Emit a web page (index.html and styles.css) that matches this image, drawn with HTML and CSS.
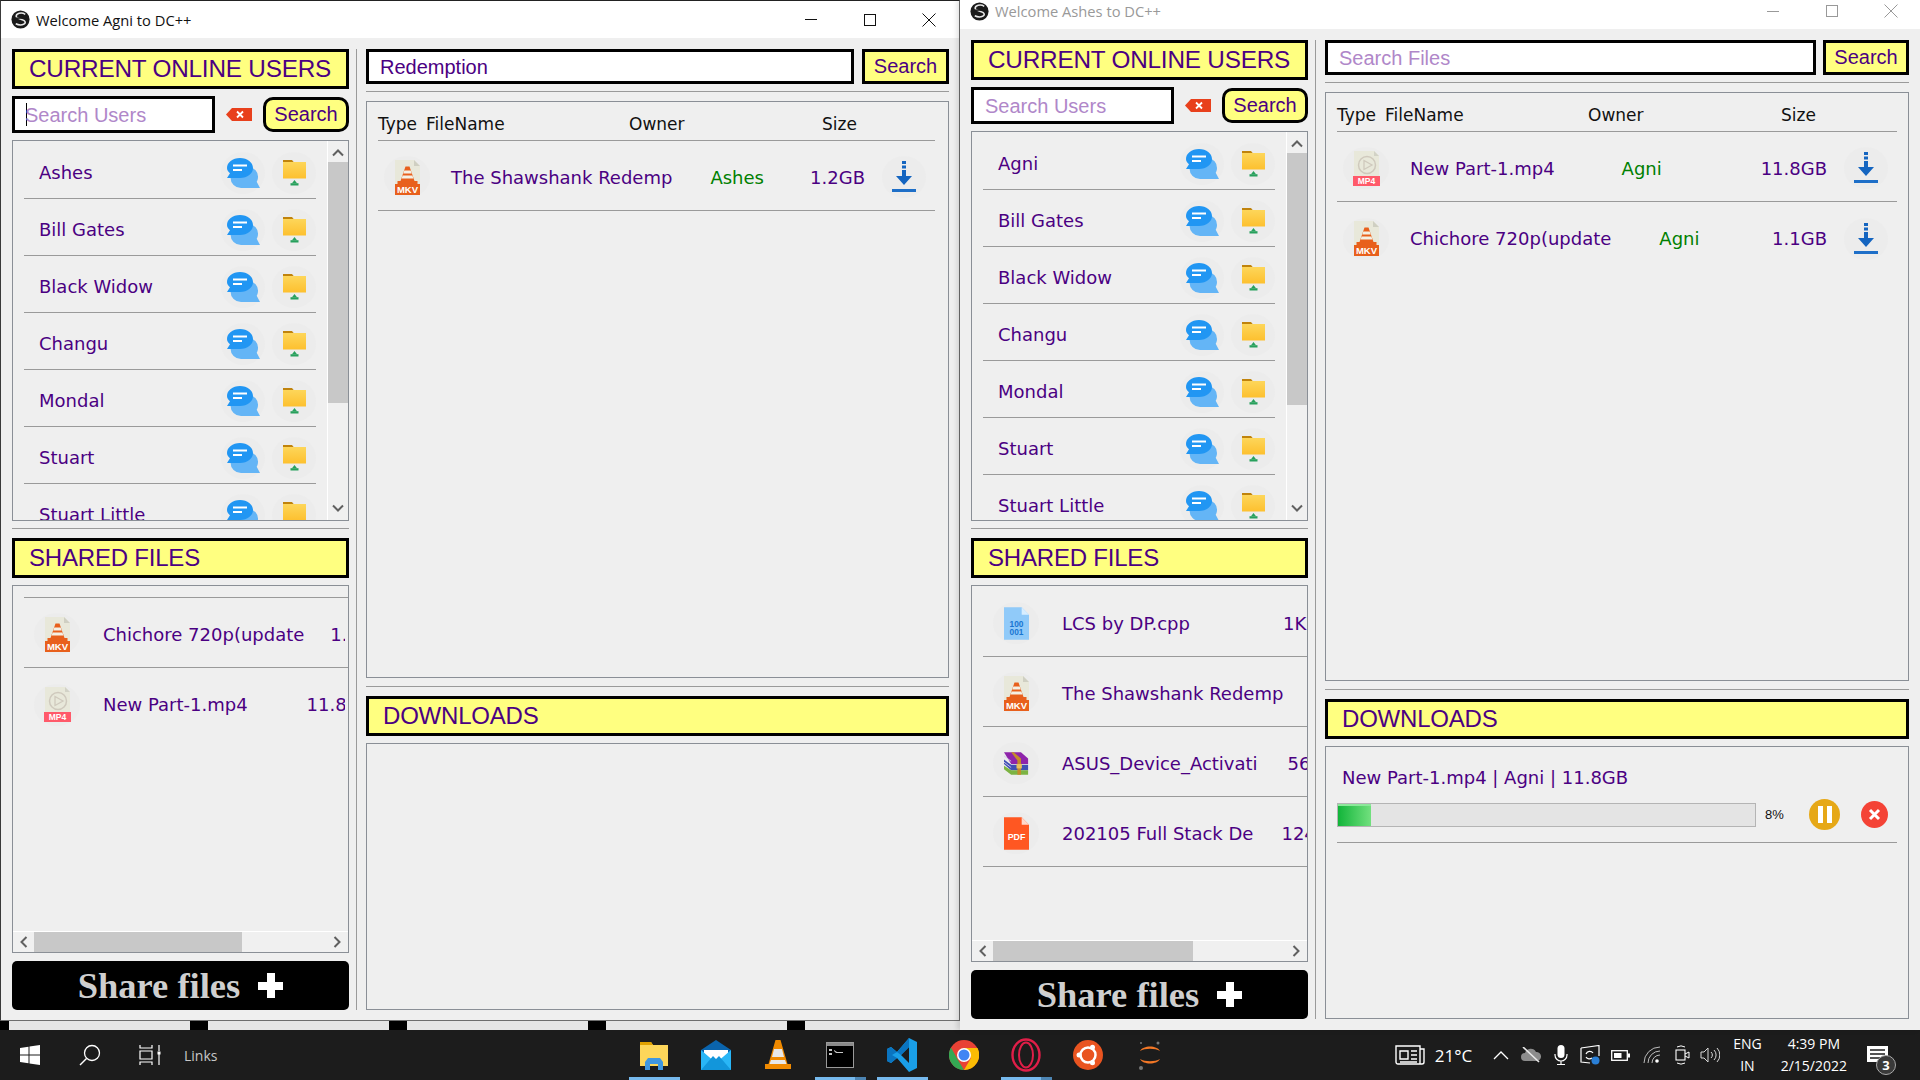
FILE: index.html
```html
<!DOCTYPE html>
<html lang="en">
<head>
  <meta charset="UTF-8" />
  <title>DC++</title>
  <link rel="stylesheet" href="styles.css">
</head>
<body>
  <svg class="gradients" width="0" height="0">
    <defs>
      <linearGradient id="folderFill" x1="0" y1="0" x2="0" y2="1"><stop offset="0" stop-color="#fdd65a"/><stop offset="1" stop-color="#fdc02f"/></linearGradient>
    </defs>
  </svg>
  <svg class="sprites" width="0" height="0">
    <symbol id="i-logo" viewBox="0 0 20 20">
      <circle cx="10" cy="10" r="9.5" fill="#1a1a1a"/>
      <path d="M15 4.5C11 2 5 3.5 5.5 7c.4 2.600 9.500 2.500 9.500 6 0 2.700-5.500 3.800-10 1.500" fill="none" stroke="#e8e8e8" stroke-width="1.600"/>
      <path d="M1 10c5-2 13-2 18 0" fill="none" stroke="#1a1a1a" stroke-width="1.500"/>
    </symbol>
    <symbol id="i-chat" viewBox="0 0 33 30">
      <path d="M14 9h8a9.500 9.500 0 0 1 9 10c0 1.800-.5 3.400-1.300 4.800L33 30H14a10.500 10.500 0 0 1 0-21z" fill="#64b5f6"/>
      <path d="M13 0c7.500 0 13 4.500 13 10s-5.500 10-13 10H0l3-4.800C1.100 13.600 0 12 0 10 0 4.500 5.500 0 13 0z" fill="#2196f3"/>
      <rect x="6" y="6.500" width="14" height="2" fill="#fff"/>
      <rect x="6" y="11" width="9" height="2" fill="#fff"/>
    </symbol>
    <symbol id="i-folder" viewBox="0 0 23 26">
      <path d="M0 0h9l2 2.500h-11z" fill="#c0830c"/>
      <rect x="0" y="2" width="23" height="16.500" fill="url(#folderFill)"/>
      <path d="M11.500 20l2.500 3.200h-5z" fill="#27a05c"/>
      <rect x="7.500" y="23.200" width="8" height="2.300" fill="#27a05c"/>
    </symbol>
    <symbol id="i-mkv" viewBox="0 0 25 35">
      <path d="M0 0h19l6 6v29H0z" fill="#e8e8da"/>
      <path d="M19 0l6 6h-6z" fill="#cfcfc2"/>
      <path d="M10.500 6.500h4l5 14.500h3v3H2.500v-3h3z" fill="#e8601c"/>
      <path d="M9.300 10.500h6.400l1 3H8.300zM7.600 15.500h9.800l1 3H6.600z" fill="#f4f0e4"/>
      <rect y="24" width="25" height="11" fill="#e8601c"/>
      <text x="12.500" y="33" class="icon-label" font-size="9.500">MKV</text>
    </symbol>
    <symbol id="i-mp4" viewBox="0 0 27 35">
      <path d="M1 0h20l5 5v25H1z" fill="#e8e8da"/>
      <path d="M21 0l5 5h-5z" fill="#d2d2c6"/>
      <circle cx="14" cy="14" r="8.500" fill="none" stroke="#cfc9bd" stroke-width="1.500"/>
      <path d="M11 9.500l8 4.500-8 4.500z" fill="none" stroke="#cfc9bd" stroke-width="1.300"/>
      <rect y="25" width="27" height="10" fill="#ff5a6a"/>
      <text x="13.500" y="33.300" class="icon-label" font-size="8.500">MP4</text>
    </symbol>
    <symbol id="i-bin" viewBox="0 0 24 31">
      <path d="M0 0h17l7 7v24H0z" fill="#90caf9"/>
      <path d="M17 0l7 7h-7z" fill="#d8eeff"/>
      <text x="12" y="19" class="icon-label bin-label" font-size="8">100</text>
      <text x="12" y="27" class="icon-label bin-label" font-size="8">001</text>
    </symbol>
    <symbol id="i-pdf" viewBox="0 0 24 31">
      <path d="M0 0h17l7 7v24H0z" fill="#ff5722"/>
      <path d="M17 0l7 7h-7z" fill="#ffd8cc"/>
      <text x="12" y="22" class="icon-label" font-size="8.500">PDF</text>
    </symbol>
    <symbol id="i-rar" viewBox="0 0 28 25">
      <path d="M0 0h19l8 7v6H8z" fill="#8e24aa"/>
      <path d="M0 8l8 6h19v6H8L0 13z" fill="#3f51b5"/>
      <path d="M0 15l8 5h19v5H8l-8-6z" fill="#7cb342"/>
      <path d="M8 0h3l8 7v18h-4V9z" fill="#c58b2a"/>
      <rect x="14" y="13" width="6" height="5" fill="#e8c15a"/>
      <path d="M0 4l8 6M0 11l8 6" stroke="#d7c9e8" stroke-width="1"/>
    </symbol>
    <symbol id="i-dl" viewBox="0 0 24 32">
      <path d="M10 0h4v3h-4zM10 4.500h4v3h-4zM10 9h4v6h6l-8 9-8-9h6z" fill="#1565c0"/>
      <rect y="28" width="24" height="3" fill="#1e6fc8"/>
    </symbol>
    <symbol id="i-clear" viewBox="0 0 26 13">
      <path d="M6 0h20v13H6L0 6.500z" fill="#e8401c"/>
      <path d="M11 3.500l6 6M17 3.500l-6 6" stroke="#fff" stroke-width="1.800"/>
    </symbol>
    <symbol id="i-chevron" viewBox="0 0 12 8">
      <path d="M1 6.500l5-5 5 5" fill="none" stroke="#606060" stroke-width="2"/>
    </symbol>
    <symbol id="i-close" viewBox="0 0 14 14">
      <path d="M.5.5l13 13M13.500.5l-13 13" fill="none" stroke="currentColor" stroke-width="1"/>
    </symbol>
    <symbol id="t-explorer" viewBox="0 0 28 30">
      <path d="M0 2h11l2 3h15v21H0z" fill="#fdd65a"/>
      <path d="M0 2h11l2 3H0z" fill="#e0a100"/>
      <path d="M5 30v-8l3-4h12l3 4v8h-5v-6h-8v6z" fill="#3f97e0"/>
    </symbol>
    <symbol id="t-mail" viewBox="0 0 30 30">
      <path d="M0 10L15 0l15 10v20H0z" fill="#0a64ad"/>
      <path d="M3 10h24v8l-12 7-12-7z" fill="#fff"/>
      <path d="M0 10l15 13 15-13v20H0z" fill="#29b6f6"/>
      <path d="M0 30l12-14 3 3 3-3 12 14z" fill="#1296db"/>
    </symbol>
    <symbol id="t-vlc" viewBox="0 0 26 30">
      <path d="M10.500 0h5l7 24h3.500v5H0v-5h3.500z" fill="#f08a00"/>
      <path d="M9 9h8l2 8H7z" fill="#e8e8e8"/>
      <path d="M6 20h14l1.500 4h-17z" fill="#e8e8e8"/>
    </symbol>
    <symbol id="t-term" viewBox="0 0 28 26">
      <rect x=".5" y=".5" width="27" height="25" fill="#000" stroke="#9a9a9a"/>
      <rect x="1" y="1" width="26" height="3" fill="#8a8a8a"/>
      <path d="M3 7h3v2H3zM3 11h3v2H3zM8 8l3 2h6v1h-7l-2-2z" fill="#c8c8c8"/>
    </symbol>
    <symbol id="t-code" viewBox="0 0 30 34">
      <path d="M22 0l8 4v26l-8 4-12-14-6 5-4-2V11l4-2 6 5zM22 9l-8 8 8 8z" fill="#1a9fe8"/>
      <path d="M10 14l-6-5-4 2v12l4 2 6-5-5-3z" fill="#0a74c0"/>
      <path d="M22 0l-12 14 4 3 8-8z" fill="#0a74c0"/>
    </symbol>
    <symbol id="t-chrome" viewBox="0 0 30 30">
      <circle cx="15" cy="15" r="15" fill="#e94235"/>
      <path d="M2 7.500L9 20l6 10A15 15 0 0 1 2 7.500z" fill="#34a853"/>
      <path d="M15 8h13.500A15 15 0 0 1 15 30l7-12z" fill="#fbbc04"/>
      <circle cx="15" cy="15" r="7" fill="#fff"/>
      <circle cx="15" cy="15" r="5.500" fill="#4285f4"/>
    </symbol>
    <symbol id="t-opera" viewBox="0 0 30 34">
      <ellipse cx="15" cy="17" rx="13.500" ry="15.500" fill="none" stroke="#e01e48" stroke-width="2.400"/>
      <ellipse cx="15" cy="17" rx="7" ry="12.500" fill="none" stroke="#e01e48" stroke-width="2"/>
    </symbol>
    <symbol id="t-ubuntu" viewBox="0 0 30 30">
      <circle cx="15" cy="15" r="15" fill="#e95420"/>
      <circle cx="15" cy="15" r="7.500" fill="none" stroke="#fff" stroke-width="2.500"/>
      <circle cx="6" cy="15" r="2.500" fill="#fff"/>
      <circle cx="19.500" cy="7.200" r="2.500" fill="#fff"/>
      <circle cx="19.500" cy="22.800" r="2.500" fill="#fff"/>
    </symbol>
    <symbol id="t-jupyter" viewBox="0 0 26 32">
      <path d="M3 12c3-6 17-6 20 0-5-3-15-3-20 0zM3 20c3 6 17 6 20 0-5 3-15 3-20 0z" fill="#f37726"/>
      <circle cx="21" cy="4" r="1.500" fill="#767676"/>
      <circle cx="4" cy="29" r="2" fill="#767676"/>
      <circle cx="4" cy="4" r="1" fill="#767676"/>
    </symbol>
  </svg>

  <div class="desktop">
    <div class="window window-agni">
      <div class="titlebar">
        <svg class="title-logo"><use href="#i-logo"/></svg>
        <span class="title-text">Welcome Agni to DC++</span>
        <div class="title-controls">
          <span class="ctrl"><span class="ctrl-min"></span></span>
          <span class="ctrl"><span class="ctrl-max"></span></span>
          <span class="ctrl"><svg class="ctrl-close"><use href="#i-close"/></svg></span>
        </div>
      </div>
      <div class="window-body">
        <section class="side">
          <h2 class="heading heading-big">CURRENT ONLINE USERS</h2>
          <div class="user-search">
            <div class="input-box user-input"><span class="caret"></span><input type="text" placeholder="Search Users"></div>
            <svg class="clear-icon"><use href="#i-clear"/></svg>
            <button class="btn btn-round">Search</button>
          </div>
          <div class="user-list">
            <div class="rows">
              <div class="user-row"><span class="user-name">Ashes</span><span class="halo"><svg class="chat-icon"><use href="#i-chat"/></svg></span><span class="halo"><svg class="folder-icon"><use href="#i-folder"/></svg></span></div>
              <div class="user-row"><span class="user-name">Bill Gates</span><span class="halo"><svg class="chat-icon"><use href="#i-chat"/></svg></span><span class="halo"><svg class="folder-icon"><use href="#i-folder"/></svg></span></div>
              <div class="user-row"><span class="user-name">Black Widow</span><span class="halo"><svg class="chat-icon"><use href="#i-chat"/></svg></span><span class="halo"><svg class="folder-icon"><use href="#i-folder"/></svg></span></div>
              <div class="user-row"><span class="user-name">Changu</span><span class="halo"><svg class="chat-icon"><use href="#i-chat"/></svg></span><span class="halo"><svg class="folder-icon"><use href="#i-folder"/></svg></span></div>
              <div class="user-row"><span class="user-name">Mondal</span><span class="halo"><svg class="chat-icon"><use href="#i-chat"/></svg></span><span class="halo"><svg class="folder-icon"><use href="#i-folder"/></svg></span></div>
              <div class="user-row"><span class="user-name">Stuart</span><span class="halo"><svg class="chat-icon"><use href="#i-chat"/></svg></span><span class="halo"><svg class="folder-icon"><use href="#i-folder"/></svg></span></div>
              <div class="user-row"><span class="user-name">Stuart Little</span><span class="halo"><svg class="chat-icon"><use href="#i-chat"/></svg></span><span class="halo"><svg class="folder-icon"><use href="#i-folder"/></svg></span></div>
            </div>
            <div class="vscroll">
              <svg class="arrow"><use href="#i-chevron"/></svg>
              <div class="vthumb"></div>
              <svg class="arrow arrow-down"><use href="#i-chevron"/></svg>
            </div>
          </div>
          <hr class="rule rule-side">
          <h2 class="heading">SHARED FILES</h2>
          <div class="shared-box">
            <div class="shared-rows">
              <div class="shared-row shared-first"><span class="file-halo"><svg class="file-icon"><use href="#i-mkv"/></svg></span><span class="shared-name">Chichore 720p(update</span><span class="shared-size size-a">1.2GB</span></div>
              <div class="shared-row no-rule"><span class="file-halo"><svg class="file-icon wide"><use href="#i-mp4"/></svg></span><span class="shared-name">New Part-1.mp4</span><span class="shared-size size-b">11.8GB</span></div>
            </div>
            <div class="hscroll">
              <svg class="arrow arrow-left"><use href="#i-chevron"/></svg>
              <div class="hthumb"></div>
              <svg class="arrow arrow-right"><use href="#i-chevron"/></svg>
            </div>
          </div>
          <button class="share-btn"><span>Share files</span><span class="share-plus"></span></button>
        </section>

        <div class="divider"></div>

        <section class="main">
          <div class="file-search">
            <div class="input-box file-input"><input type="text" value="Redemption"></div>
            <button class="btn">Search</button>
          </div>
          <hr class="rule">
          <div class="result-box">
            <div class="result-head"><span>Type</span><span>FileName</span><span>Owner</span><span>Size</span></div>
            <div class="result-row">
              <span class="file-halo"><svg class="file-icon"><use href="#i-mkv"/></svg></span>
              <span class="result-name">The Shawshank Redemp</span>
              <span class="owner owner-shaw">Ashes</span>
              <span class="result-size">1.2GB</span>
              <span class="dl-halo"><svg class="dl-icon"><use href="#i-dl"/></svg></span>
            </div>
          </div>
          <hr class="rule rule-down">
          <h2 class="heading">DOWNLOADS</h2>
          <div class="download-box"></div>
        </section>
      </div>
    </div>

    <div class="window window-ashes">
      <div class="titlebar">
        <svg class="title-logo"><use href="#i-logo"/></svg>
        <span class="title-text">Welcome Ashes to DC++</span>
        <div class="title-controls">
          <span class="ctrl"><span class="ctrl-min"></span></span>
          <span class="ctrl"><span class="ctrl-max"></span></span>
          <span class="ctrl"><svg class="ctrl-close"><use href="#i-close"/></svg></span>
        </div>
      </div>
      <div class="window-body">
        <section class="side">
          <h2 class="heading heading-big">CURRENT ONLINE USERS</h2>
          <div class="user-search">
            <div class="input-box user-input"><input type="text" placeholder="Search Users"></div>
            <svg class="clear-icon"><use href="#i-clear"/></svg>
            <button class="btn btn-round">Search</button>
          </div>
          <div class="user-list">
            <div class="rows">
              <div class="user-row"><span class="user-name">Agni</span><span class="halo"><svg class="chat-icon"><use href="#i-chat"/></svg></span><span class="halo"><svg class="folder-icon"><use href="#i-folder"/></svg></span></div>
              <div class="user-row"><span class="user-name">Bill Gates</span><span class="halo"><svg class="chat-icon"><use href="#i-chat"/></svg></span><span class="halo"><svg class="folder-icon"><use href="#i-folder"/></svg></span></div>
              <div class="user-row"><span class="user-name">Black Widow</span><span class="halo"><svg class="chat-icon"><use href="#i-chat"/></svg></span><span class="halo"><svg class="folder-icon"><use href="#i-folder"/></svg></span></div>
              <div class="user-row"><span class="user-name">Changu</span><span class="halo"><svg class="chat-icon"><use href="#i-chat"/></svg></span><span class="halo"><svg class="folder-icon"><use href="#i-folder"/></svg></span></div>
              <div class="user-row"><span class="user-name">Mondal</span><span class="halo"><svg class="chat-icon"><use href="#i-chat"/></svg></span><span class="halo"><svg class="folder-icon"><use href="#i-folder"/></svg></span></div>
              <div class="user-row"><span class="user-name">Stuart</span><span class="halo"><svg class="chat-icon"><use href="#i-chat"/></svg></span><span class="halo"><svg class="folder-icon"><use href="#i-folder"/></svg></span></div>
              <div class="user-row"><span class="user-name">Stuart Little</span><span class="halo"><svg class="chat-icon"><use href="#i-chat"/></svg></span><span class="halo"><svg class="folder-icon"><use href="#i-folder"/></svg></span></div>
            </div>
            <div class="vscroll">
              <svg class="arrow"><use href="#i-chevron"/></svg>
              <div class="vthumb"></div>
              <svg class="arrow arrow-down"><use href="#i-chevron"/></svg>
            </div>
          </div>
          <hr class="rule rule-side">
          <h2 class="heading">SHARED FILES</h2>
          <div class="shared-box">
            <div class="shared-rows">
              <div class="shared-row"><span class="file-halo"><svg class="file-icon"><use href="#i-bin"/></svg></span><span class="shared-name">LCS by DP.cpp</span><span class="shared-size size-c">1KB</span></div>
              <div class="shared-row"><span class="file-halo"><svg class="file-icon"><use href="#i-mkv"/></svg></span><span class="shared-name">The Shawshank Redemp</span></div>
              <div class="shared-row"><span class="file-halo"><svg class="file-icon"><use href="#i-rar"/></svg></span><span class="shared-name">ASUS_Device_Activati</span><span class="shared-size size-d">56MB</span></div>
              <div class="shared-row"><span class="file-halo"><svg class="file-icon"><use href="#i-pdf"/></svg></span><span class="shared-name">202105 Full Stack De</span><span class="shared-size size-e">124KB</span></div>
            </div>
            <div class="hscroll">
              <svg class="arrow arrow-left"><use href="#i-chevron"/></svg>
              <div class="hthumb"></div>
              <svg class="arrow arrow-right"><use href="#i-chevron"/></svg>
            </div>
          </div>
          <button class="share-btn"><span>Share files</span><span class="share-plus"></span></button>
        </section>

        <div class="divider"></div>

        <section class="main">
          <div class="file-search">
            <div class="input-box file-input"><input type="text" placeholder="Search Files"></div>
            <button class="btn">Search</button>
          </div>
          <hr class="rule">
          <div class="result-box">
            <div class="result-head"><span>Type</span><span>FileName</span><span>Owner</span><span>Size</span></div>
            <div class="result-row">
              <span class="file-halo"><svg class="file-icon wide"><use href="#i-mp4"/></svg></span>
              <span class="result-name">New Part-1.mp4</span>
              <span class="owner owner-new">Agni</span>
              <span class="result-size">11.8GB</span>
              <span class="dl-halo"><svg class="dl-icon"><use href="#i-dl"/></svg></span>
            </div>
            <div class="result-row no-rule">
              <span class="file-halo"><svg class="file-icon"><use href="#i-mkv"/></svg></span>
              <span class="result-name">Chichore 720p(update</span>
              <span class="owner owner-chi">Agni</span>
              <span class="result-size">1.1GB</span>
              <span class="dl-halo"><svg class="dl-icon"><use href="#i-dl"/></svg></span>
            </div>
          </div>
          <hr class="rule rule-down">
          <h2 class="heading">DOWNLOADS</h2>
          <div class="download-box">
            <div class="download-item">
              <div class="download-title">New Part-1.mp4 | Agni | 11.8GB</div>
              <div class="download-status">
                <div class="progress"><div class="progress-fill" style="width: 8%"></div></div>
                <span class="percent">8%</span>
                <span class="round-btn pause"><i></i><i></i></span>
                <span class="round-btn cancel"><svg width="13" height="13" viewBox="0 0 13 13"><path d="M2 2l9 9M11 2l-9 9" stroke="#fff" stroke-width="3"/></svg></span>
              </div>
            </div>
          </div>
        </section>
      </div>
    </div>
  </div>

  <footer class="taskbar">
    <div class="task-left">
      <span class="task-slot">
        <svg width="20" height="20" viewBox="0 0 20 20"><path d="M0 3l8.500-1.200V9.500H0zM9.500 1.600L20 0v9.500H9.500zM0 10.500h8.500v7.700L0 17zM9.500 10.500H20V20L9.500 18.400z" fill="#fff"/></svg>
      </span>
      <span class="task-slot">
        <svg width="22" height="22" viewBox="0 0 22 22"><circle cx="13" cy="9" r="7.500" fill="none" stroke="#fff" stroke-width="1.300"/><path d="M7.500 14.500L1 21" stroke="#fff" stroke-width="1.500"/></svg>
      </span>
      <span class="task-slot">
        <svg width="22" height="20" viewBox="0 0 22 20"><path d="M1 0v3h12V0M1 6h12v8H1zM1 20v-3h12v3M20 0v6M20 9v11" fill="none" stroke="#fff" stroke-width="1.200"/><rect x="18.500" y="6.500" width="3" height="3" fill="#fff"/></svg>
      </span>
      <span class="links">Links</span>
    </div>
    <div class="task-apps">
      <span class="app app-open"><svg width="28" height="30"><use href="#t-explorer"/></svg></span>
      <span class="app"><svg width="30" height="30"><use href="#t-mail"/></svg></span>
      <span class="app"><svg width="26" height="30"><use href="#t-vlc"/></svg></span>
      <span class="app app-open app-multi"><svg width="28" height="26"><use href="#t-term"/></svg></span>
      <span class="app app-open"><svg width="30" height="34"><use href="#t-code"/></svg></span>
      <span class="app"><svg width="30" height="30"><use href="#t-chrome"/></svg></span>
      <span class="app app-open app-multi"><svg width="30" height="34"><use href="#t-opera"/></svg></span>
      <span class="app"><svg width="30" height="30"><use href="#t-ubuntu"/></svg></span>
      <span class="app"><svg width="26" height="32"><use href="#t-jupyter"/></svg></span>
    </div>
    <div class="tray">
      <svg class="tray-news" width="30" height="20" viewBox="0 0 30 20"><path d="M1 1h24v18H3a2 2 0 0 1-2-2zM25 4h4v13a2 2 0 0 1-2 2h-2M5 6h8v8H5zM16 6h6M16 10h6M16 14h6M5 17h17" fill="none" stroke="#fff" stroke-width="1.400"/></svg>
      <span class="temp">21°C</span>
      <svg class="tray-chev" width="16" height="9" viewBox="0 0 16 9"><path d="M1 8l7-7 7 7" fill="none" stroke="#fff" stroke-width="1.300"/></svg>
      <svg class="tray-cloud" width="20" height="16" viewBox="0 0 20 16"><path d="M4 14a4 4 0 0 1 0-8 6 6 0 0 1 11-1 4.500 4.500 0 0 1 1 9z" fill="#8c8c8c"/><path d="M2 0l16 15" stroke="#e8e8e8" stroke-width="1.600"/></svg>
      <svg class="tray-mic" width="14" height="20" viewBox="0 0 14 20"><rect x="3.500" y="0" width="7" height="13" rx="3.500" fill="#fff"/><path d="M1 9v1a6 6 0 0 0 12 0V9M7 16v3M3 19.500h8" fill="none" stroke="#fff" stroke-width="1.200"/></svg>
      <svg class="tray-sync" width="20" height="20" viewBox="0 0 20 20"><path d="M1 3l18-2.500V11M1 3v14l9 1" fill="none" stroke="#fff" stroke-width="1.200"/><path d="M6 9a4 4 0 0 1 7-1M12 13a4 4 0 0 1-6-1" fill="none" stroke="#fff" stroke-width="1.200"/><circle cx="15.500" cy="15.500" r="4" fill="#2a7fd6"/></svg>
      <svg class="tray-batt" width="19" height="11" viewBox="0 0 19 11"><rect x=".7" y=".7" width="15.600" height="9.600" fill="none" stroke="#fff" stroke-width="1.300"/><rect x="3" y="3" width="7.500" height="5" fill="#fff"/><rect x="17" y="3.500" width="2" height="4" fill="#fff"/></svg>
      <svg class="tray-wifi" width="18" height="18" viewBox="0 0 18 18"><path d="M1 17A16 16 0 0 1 17 1M5 17A12 12 0 0 1 17 5M9 17a8 8 0 0 1 8-8" fill="none" stroke="#bdbdbd" stroke-width="1"/><circle cx="14" cy="15" r="1.800" fill="#fff"/></svg>
      <svg class="tray-cam" width="15" height="20" viewBox="0 0 15 20"><rect x="1" y="5" width="9" height="10" fill="none" stroke="#fff" stroke-width="1.100"/><path d="M10 9l4-2v6l-4-2M2 2a8 8 0 0 1 8 0M2 18a8 8 0 0 0 8 0" fill="none" stroke="#fff" stroke-width="1"/></svg>
      <svg class="tray-vol" width="20" height="16" viewBox="0 0 20 16"><path d="M1 5h3l4-4v14l-4-4H1zM11 5a4 4 0 0 1 0 6M14 3a7 7 0 0 1 0 10M17 1a10 10 0 0 1 0 14" fill="none" stroke="#d8d8d8" stroke-width="1"/></svg>
      <div class="lang"><span>ENG</span><span>IN</span></div>
      <div class="clock"><span>4:39 PM</span><span>2/15/2022</span></div>
      <div class="notify">
        <svg width="21" height="19" viewBox="0 0 21 19"><path d="M0 0h21v16H0z" fill="#fff"/><path d="M3 4h15M3 8h15M3 12h15" stroke="#1c1c1c" stroke-width="1.300"/></svg>
        <span class="notify-badge">3</span>
      </div>
    </div>
  </footer>
</body>
</html>
```

FILE: styles.css
```css
* {
  box-sizing: border-box;
}

body {
  margin: 0;
  width: 1920px;
  height: 1080px;
  overflow: hidden;
  background: #000;
  font-family: "DejaVu Sans", sans-serif;
  color: #4b0082;
}

.gradients {
  position: absolute;
}

.sprites {
  display: none;
}

.icon-label {
  font-family: "Liberation Sans", sans-serif;
  font-weight: bold;
  fill: #fff;
  text-anchor: middle;
}

.bin-label {
  fill: #1976d2;
}

/* desktop + windows */
.desktop {
  position: relative;
  height: 1030px;
  background: repeating-linear-gradient(90deg, #000 0, #000 9px, #e6e6e6 9px, #e6e6e6 190px, #000 190px, #000 199px);
}

.window {
  position: absolute;
  display: flex;
  flex-direction: column;
  background: #efefef;
}

.window-agni {
  left: 0;
  top: 0;
  width: 960px;
  height: 1021px;
  border: 1px solid #3a3a3a;
  border-top-color: #222;
  border-bottom-color: #6e6e6e;
  border-right-color: #6e6e6e;
  z-index: 1;
}

.window-ashes {
  left: 960px;
  top: 0;
  width: 960px;
  height: 1030px;
  box-shadow: -3px 0 5px rgba(0, 0, 0, 0.12);
  z-index: 2;
}

.titlebar {
  display: flex;
  align-items: center;
  flex: none;
  background: #fff;
  font-family: "Open Sans", sans-serif;
  font-size: 14.700px;
}

.window-agni .titlebar {
  height: 37px;
  padding: 0 1px 0 10px;
  color: #111;
}

.window-ashes .titlebar {
  height: 29px;
  padding: 0 0 7px 10px;
  color: #999;
}

.title-logo {
  width: 19px;
  height: 19px;
  margin-right: 6px;
}

.title-controls {
  display: flex;
  margin-left: auto;
  height: 100%;
}

.ctrl {
  width: 59px;
  display: flex;
  align-items: center;
  justify-content: center;
}

.ctrl-min {
  width: 12px;
  border-top: 1px solid currentColor;
}

.ctrl-max {
  width: 12px;
  height: 12px;
  border: 1px solid currentColor;
}

.ctrl-close {
  width: 14px;
  height: 14px;
}

.window-body {
  flex: 1;
  display: flex;
  min-height: 0;
  padding: 11px 10px 11px 11px;
}

.window-agni .window-body {
  padding-bottom: 10px;
}

.side {
  width: 337px;
  display: flex;
  flex-direction: column;
}

.divider {
  width: 1px;
  margin: 0 9px 0 7px;
  background: #9a9a9a;
}

.main {
  width: 584px;
  display: flex;
  flex-direction: column;
}

/* headings */
.heading {
  flex: none;
  height: 40px;
  margin: 0;
  padding: 0 0 0 14px;
  display: flex;
  align-items: center;
  background: #ffff80;
  border: 3px solid #000;
  font-family: "Liberation Sans", sans-serif;
  font-weight: normal;
  font-size: 24px;
  letter-spacing: -0.2px;
}

.heading-big {
  font-size: 24.300px;
}

.rule {
  flex: none;
  width: 100%;
  margin: 0;
  border: 0;
  border-top: 1px solid #9a9a9a;
}

/* inputs + buttons */
.input-box {
  display: flex;
  align-items: center;
  background: #fff;
  border: 3px solid #000;
  padding: 2px 0 0 11px;
}

.input-box input {
  flex: 1;
  min-width: 0;
  border: 0;
  outline: 0;
  padding: 0;
  background: transparent;
  font-family: "Liberation Sans", sans-serif;
  font-size: 20px;
  color: #4b0082;
}

.input-box input::placeholder {
  color: #b087c9;
  opacity: 1;
}

.caret {
  width: 1px;
  height: 23px;
  margin-top: -2px;
  background: #000;
}

.btn {
  flex: none;
  padding: 0;
  background: #ffff80;
  border: 3px solid #000;
  font-family: "Liberation Sans", sans-serif;
  font-size: 20px;
  color: #4b0082;
}

.btn-round {
  width: 86px;
  height: 35px;
  border-radius: 10px;
}

.user-search {
  flex: none;
  display: flex;
  align-items: center;
  height: 37px;
  margin: 7px 0;
}

.user-input {
  width: 203px;
  height: 37px;
}

.window-agni .user-input input {
  margin-left: -2px;
}

.clear-icon {
  width: 26px;
  height: 13px;
  margin: 0 auto;
}

/* user list */
.user-list {
  flex: none;
  display: flex;
  border: 1px solid #8a8f96;
  overflow: hidden;
}

.window-agni .user-list {
  height: 381px;
}

.window-ashes .user-list {
  height: 390px;
}

.rows {
  flex: 1;
  padding: 1px 0 0 11px;
  overflow: hidden;
}

.user-row {
  display: flex;
  align-items: center;
  gap: 7px;
  width: 292px;
  height: 57px;
  padding: 5px 0 0 15px;
  border-bottom: 1px solid #9a9a9a;
  font-size: 18px;
}

.user-row:last-child {
  height: 70px;
  padding-bottom: 14px;
  border-bottom: 0;
}

.user-name {
  flex: 1;
}

.halo {
  width: 44px;
  height: 42px;
  border-radius: 50%;
  background: #ececec;
  display: flex;
  align-items: center;
  justify-content: center;
}

.chat-icon {
  width: 33px;
  height: 30px;
}

.folder-icon {
  width: 23px;
  height: 26px;
}

.vscroll {
  flex: none;
  width: 21px;
  display: flex;
  flex-direction: column;
  align-items: center;
  background: #f0f0f0;
  border-left: 1px solid #fff;
}

.arrow {
  flex: none;
  width: 12px;
  height: 8px;
}

.vscroll .arrow {
  margin: 8px 0 5px;
}

.vscroll .arrow-down {
  margin: auto 0 8px;
  transform: rotate(180deg);
}

.vthumb {
  width: 100%;
  background: #c8c8c8;
}

.window-agni .vthumb {
  height: 241px;
}

.window-ashes .vthumb {
  height: 252px;
}

.rule-side {
  margin: 7px 0 9px;
}

/* shared files */
.shared-box {
  flex: 1;
  min-height: 0;
  margin-top: 7px;
  display: flex;
  flex-direction: column;
  border: 1px solid #8a8f96;
}

.shared-rows {
  flex: 1;
  min-height: 0;
  overflow: hidden;
  padding: 1px 0 0 11px;
}

.shared-row {
  display: flex;
  align-items: center;
  width: 324px;
  height: 70px;
  padding: 3px 0 0 10px;
  border-bottom: 1px solid #9a9a9a;
  font-size: 18px;
  white-space: nowrap;
  overflow: hidden;
}

.shared-first {
  height: 71px;
  margin-top: 10px;
  border-top: 1px solid #9a9a9a;
}

.no-rule {
  border-bottom: 0;
}

.file-halo {
  flex: none;
  width: 46px;
  height: 42px;
  border-radius: 50%;
  background: #ececec;
  display: flex;
  align-items: center;
  justify-content: center;
}

.file-icon {
  width: 25px;
  height: 35px;
}

.file-icon.wide {
  width: 27px;
}

.shared-name {
  margin-left: 23px;
}

.shared-size {
  flex: none;
  overflow: hidden;
}

.size-a {
  width: 15px;
  margin-left: 26px;
}

.size-b {
  width: 38px;
  margin-left: 59px;
}

.size-c {
  margin-left: 93px;
}

.size-d {
  margin-left: 30px;
}

.size-e {
  margin-left: 28px;
}

.hscroll {
  flex: none;
  height: 21px;
  display: flex;
  align-items: center;
  background: #f0f0f0;
  border-top: 1px solid #fff;
}

.hscroll .arrow {
  width: 12px;
}

.arrow-left {
  margin-left: 5px;
  transform: rotate(-90deg);
}

.arrow-right {
  margin: 0 5px 0 auto;
  transform: rotate(90deg);
}

.hthumb {
  height: 100%;
  margin-left: 4px;
  background: #c8c8c8;
}

.window-agni .hthumb {
  width: 208px;
}

.window-ashes .hthumb {
  width: 200px;
}

.share-btn {
  flex: none;
  height: 49px;
  margin-top: 8px;
  padding: 0;
  display: flex;
  align-items: center;
  justify-content: center;
  gap: 18px;
  background: #000;
  border: 0;
  border-radius: 5px;
  color: #cfcfcf;
  font-family: "Liberation Serif", serif;
  font-weight: bold;
  font-size: 36.500px;
}

.share-plus {
  width: 25px;
  height: 25px;
  background:
    linear-gradient(#fff, #fff) center / 8px 100% no-repeat,
    linear-gradient(#fff, #fff) center / 100% 8px no-repeat;
}

/* file search + results */
.file-search {
  flex: none;
  display: flex;
  gap: 8px;
  height: 35px;
}

.file-input {
  flex: 1;
}

.main .btn {
  width: 87px;
}

.window-ashes .file-search {
  gap: 7px;
}

.window-ashes .main .btn {
  width: 86px;
}

.main .rule:not(.rule-down) {
  margin: 7px 0 9px;
}

.result-box {
  flex: none;
  border: 1px solid #8a8f96;
  padding: 0 13px 0 11px;
}

.window-agni .result-box {
  height: 577px;
}

.window-ashes .result-box {
  height: 589px;
  padding-right: 11px;
}

.result-head {
  display: grid;
  grid-template-columns: 48px 203px 193px auto;
  align-items: center;
  height: 39px;
  padding-top: 6px;
  border-bottom: 1px solid #9a9a9a;
  color: #111;
  font-size: 17px;
}

.result-row {
  display: flex;
  align-items: center;
  height: 70px;
  padding: 3px 9px 0 6px;
  border-bottom: 1px solid #9a9a9a;
  font-size: 18px;
  white-space: nowrap;
}

.result-row.no-rule {
  border-bottom: 0;
}

.result-name {
  margin-left: 21px;
}

.owner {
  color: #008000;
}

.owner-shaw {
  margin-left: 38px;
}

.owner-new {
  margin-left: 67px;
}

.owner-chi {
  margin-left: 48px;
}

.result-size {
  margin-left: auto;
}

.dl-halo {
  width: 44px;
  height: 42px;
  margin-left: 17px;
  border-radius: 50%;
  background: #ececec;
  display: flex;
  align-items: center;
  justify-content: center;
}

.dl-icon {
  width: 24px;
  height: 32px;
}

.rule-down {
  margin: 8px 0 9px;
}

.download-box {
  flex: 1;
  min-height: 0;
  margin-top: 7px;
  border: 1px solid #8a8f96;
  padding: 0 11px;
}

.download-item {
  height: 96px;
  padding-top: 20px;
  border-bottom: 1px solid #9a9a9a;
}

.download-title {
  padding-left: 5px;
  font-size: 18px;
}

.download-status {
  display: flex;
  align-items: center;
  margin-top: 11px;
}

.progress {
  width: 419px;
  height: 24px;
  background: #e4e4e4;
  border: 1px solid #b4b4b4;
}

.progress-fill {
  height: 100%;
  background: linear-gradient(90deg, #12b53a, #72e07e);
  border-top: 2px solid #8ce89a;
}

.percent {
  margin-left: 9px;
  width: 44px;
  color: #111;
  font-family: "Liberation Sans", sans-serif;
  font-size: 13px;
}

.round-btn {
  display: flex;
  align-items: center;
  justify-content: center;
  border-radius: 50%;
}

.pause {
  gap: 4px;
  width: 31px;
  height: 31px;
  background: #e6a817;
}

.pause i {
  width: 5px;
  height: 17px;
  background: #fff;
}

.cancel {
  width: 27px;
  height: 27px;
  margin-left: 21px;
  background: #f44336;
}

/* taskbar */
.taskbar {
  height: 50px;
  display: flex;
  background: #1c1c1c;
  color: #fff;
  font-family: "Open Sans", sans-serif;
}

.task-left {
  display: flex;
  align-items: center;
  width: 623px;
}

.task-slot {
  width: 60px;
  display: flex;
  justify-content: center;
}

.links {
  margin-left: 4px;
  font-size: 14px;
  color: #c8c8c8;
}

.task-apps {
  display: flex;
}

.app {
  position: relative;
  width: 62px;
  display: flex;
  align-items: center;
  justify-content: center;
}

.app-open::after {
  content: "";
  position: absolute;
  left: 6px;
  right: 5px;
  bottom: 0;
  height: 3px;
  background: #76b9ed;
}

.app-multi::before {
  content: "";
  position: absolute;
  right: 5px;
  bottom: 0;
  width: 11px;
  height: 3px;
  background: #4d85b3;
  z-index: 1;
}

.tray {
  margin-left: auto;
  padding-right: 32px;
  display: flex;
  align-items: center;
}

.temp {
  margin: 0 21px 0 10px;
  font-size: 17px;
}

.tray-cloud {
  margin-left: 12px;
}

.tray-mic {
  margin-left: 13px;
}

.tray-sync {
  margin-left: 12px;
}

.tray-batt {
  margin-left: 11px;
}

.tray-wifi {
  margin-left: 13px;
}

.tray-cam {
  margin-left: 14px;
}

.tray-vol {
  margin-left: 10px;
}

.lang,
.clock {
  display: flex;
  flex-direction: column;
  align-items: center;
  gap: 2px;
  font-size: 14px;
  line-height: 20px;
}

.lang {
  margin-left: 13px;
}

.clock {
  margin-left: 19px;
}

.notify {
  position: relative;
  margin-left: 20px;
  width: 21px;
  height: 19px;
}

.notify-badge {
  position: absolute;
  left: 9px;
  top: 9px;
  width: 20px;
  height: 20px;
  border-radius: 50%;
  background: #3a3a3a;
  border: 1px solid #aaa;
  font-size: 13px;
  font-weight: bold;
  line-height: 18px;
  text-align: center;
}
```
